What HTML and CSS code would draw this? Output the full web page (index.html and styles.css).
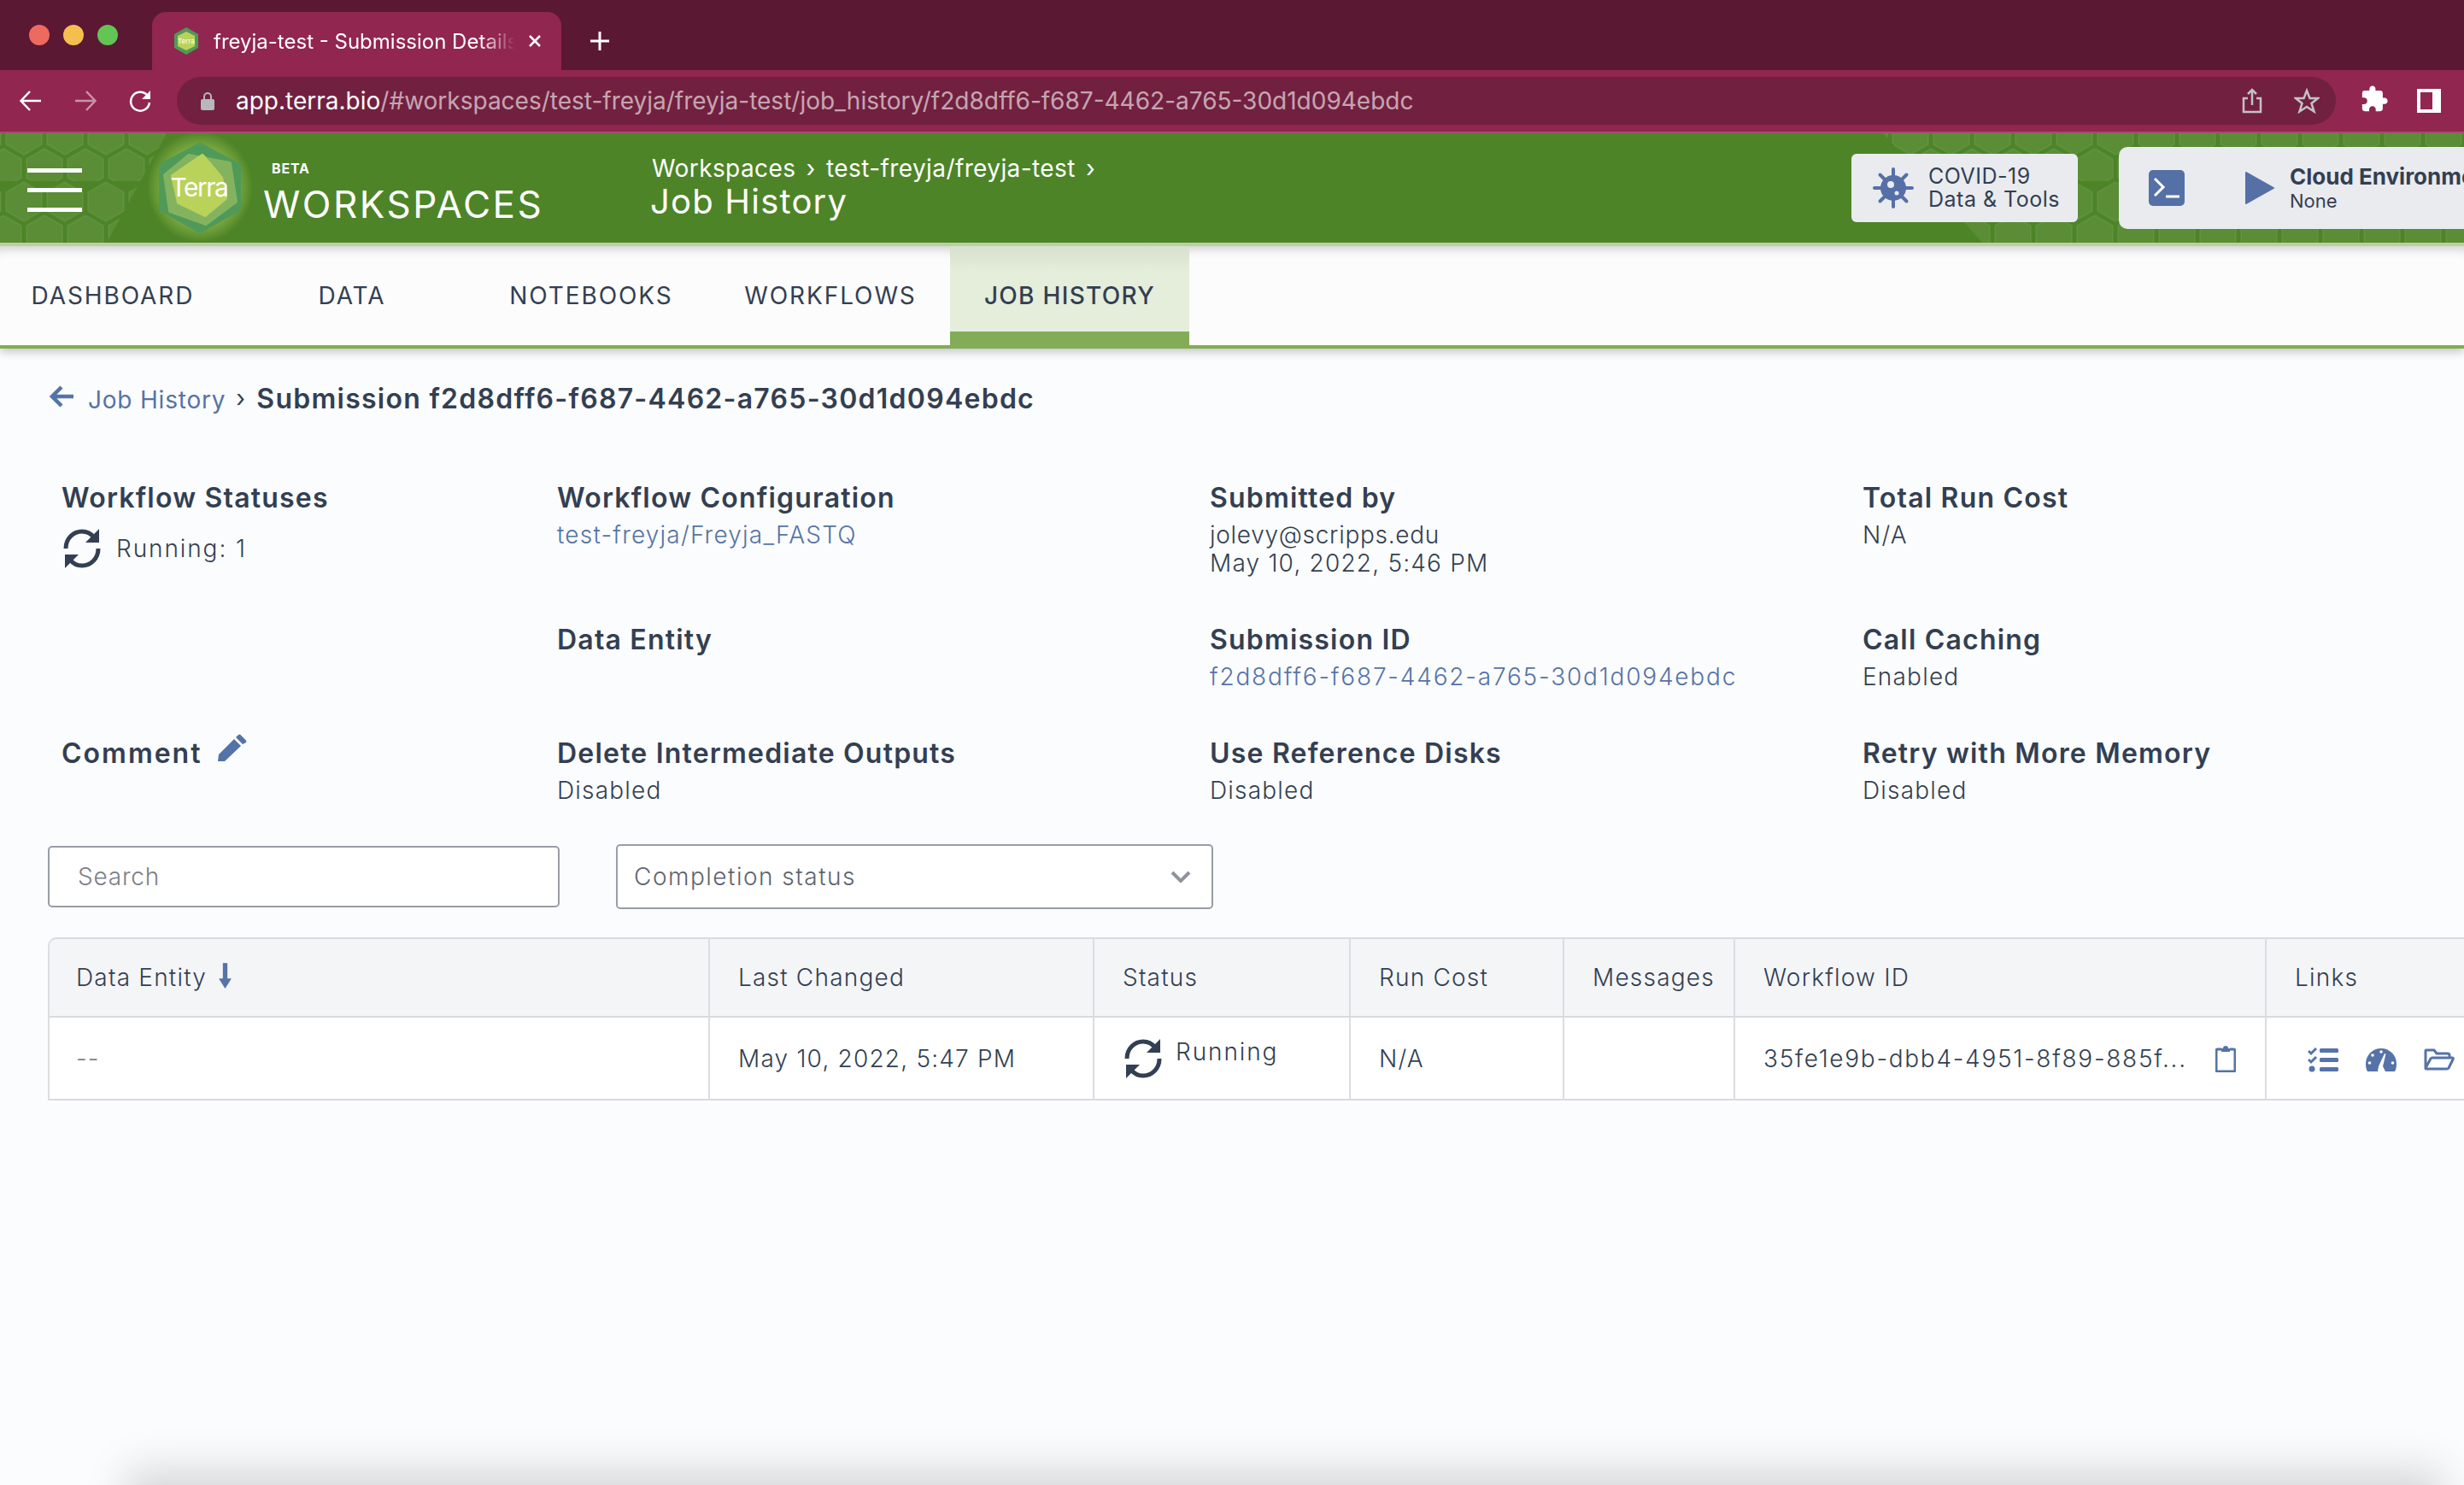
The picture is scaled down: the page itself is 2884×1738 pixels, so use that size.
FILE: index.html
```html
<!doctype html>
<html>
<head>
<meta charset="UTF-8">
<title>freyja-test - Submission Details</title>
<link rel="stylesheet" href="styles.css">
</head>
<body>
  <svg class="defs" width="0" height="0">
    <defs>
      <g id="sync">
        <path class="sync-arc" d="M5 25 C5 13 14 5 24 5 C30 5 35 8 38 12 M43 25 C43 37 34 45 24 45 C18 45 13 42 10 38"/>
        <path d="M44 2 V18 H28Z M4 48 V32 H20Z"/>
      </g>
      <pattern id="hexes" patternUnits="userSpaceOnUse" width="48" height="78" x="4" y="-22">
        <path d="M24 1 L45 13 V35 L24 47 L3 35 V13Z M0 40 L21 52 V74 L0 86 M48 40 L27 52 V74 L48 86" fill="#fff" fill-opacity=".07" stroke="#fff" stroke-opacity=".06" stroke-width="2"/>
      </pattern>
      <radialGradient id="glow">
        <stop offset="55%" stop-color="#c6e36a" stop-opacity=".6"/>
        <stop offset="100%" stop-color="#c6e36a" stop-opacity="0"/>
      </radialGradient>
    </defs>
  </svg>

  <!--browser chrome-->
  <div class="tabstrip">
    <div class="lights"><i class="light red"></i><i class="light yellow"></i><i class="light green"></i></div>
    <div class="tab">
      <svg class="favicon" viewBox="0 0 28 32">
        <path d="M14 0 L28 8 V24 L14 32 L0 24 V8Z" fill="#4f9a58"/>
        <path d="M14 5 L24 10 V22 L14 27 L4 22 V10Z" fill="#b9d25a"/>
        <text x="14" y="19" text-anchor="middle" class="favicon-text">Terra</text>
      </svg>
      <span class="tab-title">freyja-test - Submission Details</span>
      <svg class="tab-close" viewBox="0 0 16 16"><path d="M2 2 L14 14 M14 2 L2 14"/></svg>
    </div>
    <svg class="new-tab" viewBox="0 0 24 24"><path d="M12 1 V23 M1 12 H23"/></svg>
  </div>
  <div class="toolbar">
    <svg class="tool-icon" viewBox="0 0 28 28"><path d="M26 14 H3 M13 3 L2.500 14 L13 25"/></svg>
    <svg class="tool-icon dim" viewBox="0 0 28 28"><path d="M2 14 H25 M15 3 L25.500 14 L15 25"/></svg>
    <svg class="tool-icon" viewBox="0 0 28 28"><path d="M23.500 9 A11 11 0 1 0 25 16"/><path class="solid" d="M26 2 V12 H16Z"/></svg>
    <div class="omnibox">
      <svg class="lock" viewBox="0 0 16 22"><path d="M4 9 V6 a4 4 0 0 1 8 0 V9" fill="none" stroke="#b5b8bd" stroke-width="2"/><rect y="9" width="16" height="13" rx="2" fill="#b5b8bd"/></svg>
      <span class="url"><b>app.terra.bio</b>/#workspaces/test-freyja/freyja-test/job_history/f2d8dff6-f687-4462-a765-30d1d094ebdc</span>
      <svg class="omni-icon" viewBox="0 0 24 30"><path d="M12 20 V2 M7 7 L12 2 L17 7 M7 12 H2 V28 H22 V12 H17"/></svg>
      <svg class="omni-icon star" viewBox="0 0 30 30"><path d="M15 3 L18.500 12 H28 L20.500 18 L23.500 27.500 L15 22 L6.500 27.500 L9.500 18 L2 12 H11.500Z"/></svg>
    </div>
    <svg class="puzzle" viewBox="0 0 24 24"><path d="M20.500 11H19V7c0-1.100-.9-2-2-2h-4V3.500C13 2.120 11.880 1 10.500 1S8 2.120 8 3.500V5H4c-1.100 0-1.990.9-1.990 2v3.800H3.500c1.490 0 2.700 1.210 2.700 2.700s-1.210 2.700-2.700 2.700H2V20c0 1.100.9 2 2 2h3.800v-1.500c0-1.490 1.210-2.700 2.700-2.700 1.490 0 2.700 1.210 2.700 2.700V22H17c1.100 0 2-.9 2-2v-4h1.500c1.380 0 2.500-1.120 2.500-2.500S21.880 11 20.500 11z"/></svg>
    <i class="side-panel"></i>
  </div>

  <!--terra header-->
  <header class="app-header">
    <svg class="hex-bg" width="2884" height="128">
      <path d="M0 0 H195 L125 128 H0Z" fill="url(#hexes)"/>
      <path d="M2204 0 H2884 V128 H2320 L2260 60Z" fill="url(#hexes)"/>
    </svg>
    <div class="burger"><i></i><i></i><i></i></div>
    <svg class="logo" viewBox="0 0 130 128">
      <ellipse cx="65" cy="63" rx="62" ry="65" fill="url(#glow)"/>
      <path d="M65 14 L110 38 V88 L65 114 L20 88 V38Z" fill="#4f9a58" stroke="#4f9a58" stroke-width="6" stroke-linejoin="round"/>
      <path d="M52 26 L100 35 L107 80 L72 106 L30 91 L24 49Z" fill="#84b35f" stroke="#84b35f" stroke-width="4" stroke-linejoin="round"/>
      <path d="M68 26 L90 52 L95 76 L71 96 L40 81 L33 50Z" fill="#b9d25a" stroke="#b9d25a" stroke-width="4" stroke-linejoin="round"/>
      <text x="64" y="74" text-anchor="middle" class="logo-text">Terra</text>
    </svg>
    <div class="brand">
      <div class="beta">BETA</div>
      <div class="brand-name">WORKSPACES</div>
    </div>
    <div class="crumbs">
      <div class="crumb-path">Workspaces <span class="sep">›</span> test-freyja/freyja-test <span class="sep">›</span></div>
      <div class="crumb-page">Job History</div>
    </div>
    <div class="covid-btn">
      <svg class="virus" viewBox="0 0 48 48">
        <g class="virus-spikes"><path d="M24 2 V46 M2 24 H46 M8.500 8.500 L39.500 39.500 M39.500 8.500 L8.500 39.500"/></g>
        <circle cx="24" cy="24" r="15" fill="#5570a6"/>
        <circle cx="21" cy="20" r="4" fill="#e9ebef"/>
        <circle cx="28" cy="30" r="2.500" fill="#e9ebef"/>
      </svg>
      <div class="covid-text">COVID-19<br>Data &amp; Tools</div>
    </div>
    <div class="cloud-card">
      <svg class="terminal" viewBox="0 0 42 42">
        <rect width="42" height="42" rx="5" fill="#5570a6"/>
        <path d="M7 10 L17 20 L7 30 M20 31 H36" fill="none" stroke="#fff" stroke-width="3"/>
      </svg>
      <svg class="play" viewBox="0 0 36 40"><path d="M2 2 L34 20 L2 38Z"/></svg>
      <div class="cloud-text"><b>Cloud Environment</b><span>None</span></div>
    </div>
  </header>

  <nav class="tabs">
    <a class="nav-tab first">DASHBOARD</a>
    <a class="nav-tab">DATA</a>
    <a class="nav-tab">NOTEBOOKS</a>
    <a class="nav-tab">WORKFLOWS</a>
    <a class="nav-tab active">JOB HISTORY</a>
  </nav>

  <main class="content">
    <div class="back-row">
      <svg class="back-arrow" viewBox="0 0 28 28"><path d="M14 3 L3 14 L14 25 M3 14 H28"/></svg>
      <a class="link back-link">Job History</a>
      <span class="back-sep">›</span>
      <h1 class="sub-title">Submission f2d8dff6-f687-4462-a765-30d1d094ebdc</h1>
    </div>

    <section class="meta">
      <div>
        <div class="meta-title">Workflow Statuses</div>
        <div class="running"><svg class="sync" viewBox="0 0 48 50"><use href="#sync"/></svg><span>Running: 1</span></div>
      </div>
      <div>
        <div class="meta-title">Workflow Configuration</div>
        <div class="meta-value link">test-freyja/Freyja_FASTQ</div>
      </div>
      <div>
        <div class="meta-title">Submitted by</div>
        <div class="meta-value"><span class="email">jolevy@scripps.edu</span><br>May 10, 2022, 5:46 PM</div>
      </div>
      <div>
        <div class="meta-title">Total Run Cost</div>
        <div class="meta-value">N/A</div>
      </div>

      <div></div>
      <div><div class="meta-title">Data Entity</div></div>
      <div>
        <div class="meta-title">Submission ID</div>
        <div class="meta-value link sub-id">f2d8dff6-f687-4462-a765-30d1d094ebdc</div>
      </div>
      <div>
        <div class="meta-title">Call Caching</div>
        <div class="meta-value">Enabled</div>
      </div>

      <div>
        <div class="meta-title comment">Comment
          <svg class="pencil" viewBox="0 0 35 33"><path d="M1 32 L2 24 L20 6 L28 14 L9 32Z M22 4 L25 1 Q26 0 27.500 1 L33.500 7 Q35 8.500 34 10 L30 12Z"/></svg>
        </div>
      </div>
      <div>
        <div class="meta-title">Delete Intermediate Outputs</div>
        <div class="meta-value">Disabled</div>
      </div>
      <div>
        <div class="meta-title">Use Reference Disks</div>
        <div class="meta-value">Disabled</div>
      </div>
      <div>
        <div class="meta-title">Retry with More Memory</div>
        <div class="meta-value">Disabled</div>
      </div>
    </section>

    <div class="filters">
      <div class="search">Search</div>
      <div class="select">
        <span>Completion status</span>
        <svg class="chevron" viewBox="0 0 24 14"><path d="M2 2 L12 12 L22 2"/></svg>
      </div>
    </div>

    <table class="runs">
      <thead>
        <tr>
          <th class="c-entity">Data Entity <svg class="sort" viewBox="0 0 16 28"><path d="M8 0 V20"/><path class="solid" d="M1 17 H15 L8 28Z"/></svg></th>
          <th class="c-changed">Last Changed</th>
          <th class="c-status">Status</th>
          <th class="c-cost">Run Cost</th>
          <th class="c-msg">Messages</th>
          <th class="c-id">Workflow ID</th>
          <th class="c-links">Links</th>
        </tr>
      </thead>
      <tbody>
        <tr>
          <td class="muted">--</td>
          <td>May 10, 2022, 5:47 PM</td>
          <td><div class="status-cell"><svg class="sync" viewBox="0 0 48 50"><use href="#sync"/></svg><span>Running</span></div></td>
          <td>N/A</td>
          <td></td>
          <td>
            <div class="id-cell">
              <span class="wf-id">35fe1e9b-dbb4-4951-8f89-885f...</span>
              <svg class="clip" viewBox="0 0 24 32"><path class="line" d="M7 5 H3 Q1 5 1 7 V29 Q1 31 3 31 H21 Q23 31 23 29 V7 Q23 5 21 5 H17"/><path class="solid" d="M7 8 V4 H9 A3 3 0 0 1 15 4 H17 V8Z"/></svg>
            </div>
          </td>
          <td>
            <div class="link-icons">
              <svg class="row-icon" viewBox="0 0 36 30">
                <path class="check" d="M1 5 L4 8 L10 2 M1 15 L4 18 L10 12"/>
                <circle class="solid" cx="5" cy="26" r="3.500"/>
                <rect class="solid" x="14" y="2" width="22" height="5" rx="1.500"/>
                <rect class="solid" x="14" y="13" width="22" height="5" rx="1.500"/>
                <rect class="solid" x="14" y="24" width="22" height="5" rx="1.500"/>
              </svg>
              <svg class="row-icon" viewBox="0 0 36 30">
                <path class="solid" d="M0 20 A18 18 0 0 1 36 20 Q36 26 34 29 H2 Q0 26 0 20Z"/>
                <g fill="#fff"><circle cx="18" cy="6" r="1.800"/><circle cx="8" cy="10" r="1.800"/><circle cx="4.500" cy="19" r="1.800"/><circle cx="31.500" cy="19" r="1.800"/></g>
                <path d="M14 29 L15 23 L22 8 L23.500 8.500 L20 23 L23 29Z" fill="#fff"/>
              </svg>
              <svg class="row-icon" viewBox="0 0 36 26">
                <path class="line" d="M2 23 V3 Q2 2 3 2 H12 L15 6 H28 Q30 6 30 8 V11 M2 23 L8 12 Q9 11 10 11 H33 Q35 11 34 13 L29 23 Q28 24 27 24 H3 Q2 24 2 23Z"/>
              </svg>
            </div>
          </td>
        </tr>
      </tbody>
    </table>
  </main>
  <div class="edge-shade"></div>
</body>
</html>
```

FILE: styles.css
```css
* {
  box-sizing: border-box;
}
html, body {
  width: 100%;
  height: 100%;
  overflow: hidden;
}
body {
  margin: 0;
  display: flex;
  flex-direction: column;
  background: #fbfcfd;
  color: #333f52;
  font-family: Inter, "Liberation Sans", sans-serif;
  font-size: 28px;
}
.defs {
  position: absolute;
}
i {
  display: block;
}

/* browser chrome */
.tabstrip {
  height: 82px;
  flex: none;
  display: flex;
  align-items: flex-end;
  background: #5b1833;
}
.lights {
  display: flex;
  gap: 16px;
  width: 178px;
  padding: 0 0 29px 34px;
}
.light {
  width: 24px;
  height: 24px;
  border-radius: 50%;
}
.red { background: #ed6a5e; }
.yellow { background: #f5bf4f; }
.green { background: #62c554; }
.tab {
  width: 479px;
  height: 68px;
  display: flex;
  align-items: center;
  padding-left: 26px;
  background: #912650;
  border-radius: 16px 16px 0 0;
  color: #fff;
}
.favicon {
  width: 28px;
  height: 32px;
  flex: none;
}
.favicon-text {
  font-size: 8px;
  fill: #fff;
}
.tab-title {
  width: 353px;
  margin-left: 18px;
  font-size: 24px;
  white-space: nowrap;
  overflow: hidden;
  -webkit-mask-image: linear-gradient(to right, #000 88%, transparent 100%);
  mask-image: linear-gradient(to right, #000 88%, transparent 100%);
}
.tab-close {
  width: 16px;
  height: 16px;
  margin-left: 15px;
  fill: none;
  stroke: #fff;
  stroke-width: 2.500;
}
.new-tab {
  width: 24px;
  height: 24px;
  margin: 0 0 22px 33px;
  fill: none;
  stroke: #fff;
  stroke-width: 3;
}
.toolbar {
  height: 74px;
  flex: none;
  display: flex;
  align-items: flex-start;
  padding: 8px 26px 0 22px;
  background: #912650;
  border-bottom: 2px solid #a0506c;
}
.tool-icon {
  width: 28px;
  height: 28px;
  margin: 14px 36px 0 0;
  flex: none;
  fill: none;
  stroke: #fff;
  stroke-width: 2.500;
}
.tool-icon.dim {
  opacity: .5;
}
.tool-icon .solid {
  fill: #fff;
  stroke: none;
}
.omnibox {
  width: 2527px;
  height: 56px;
  margin-left: -7px;
  flex: none;
  display: flex;
  align-items: center;
  padding-left: 28px;
  background: #72203f;
  border-radius: 28px;
}
.lock {
  width: 16px;
  height: 22px;
  flex: none;
}
.url {
  flex: 1;
  margin-left: 25px;
  color: rgba(255, 255, 255, .62);
  font-size: 28px;
  white-space: nowrap;
}
.url b {
  color: #fff;
  font-weight: 400;
}
.omni-icon {
  width: 24px;
  height: 30px;
  margin-right: 37px;
  flex: none;
  fill: none;
  stroke: #c4c1c4;
  stroke-width: 2.500;
}
.omni-icon.star {
  width: 30px;
  margin-right: 19px;
}
.puzzle {
  width: 34px;
  height: 34px;
  margin: 9px 0 0 28px;
  flex: none;
  fill: #fff;
}
.side-panel {
  width: 28px;
  height: 28px;
  margin: 14px 0 0 33px;
  flex: none;
  border: solid #fff;
  border-width: 4px 10px 4px 4px;
}

/* terra header */
.app-header {
  position: relative;
  height: 132px;
  flex: none;
  display: flex;
  align-items: flex-start;
  background: #4d8427;
  border-bottom: 4px solid #b9d19d;
}
.hex-bg {
  position: absolute;
  left: 0;
  top: 0;
}
.burger, .logo, .brand, .crumbs, .covid-btn, .cloud-card {
  position: relative;
}
.burger {
  width: 64px;
  margin: 41px 0 0 32px;
}
.burger i {
  height: 5px;
  margin-bottom: 18px;
  background: #fff;
}
.logo {
  width: 130px;
  height: 128px;
  margin-left: 73px;
  flex: none;
}
.logo-text {
  font-size: 30px;
  letter-spacing: -1.500px;
  fill: #fff;
}
.brand {
  width: 453px;
  margin-left: 11px;
  color: #fff;
}
.beta {
  margin: 31px 0 0 8px;
  font-size: 16px;
  line-height: 20px;
  font-weight: 700;
  letter-spacing: .8px;
}
.brand-name {
  margin-top: 8px;
  margin-left: -2px;
  font-size: 44px;
  line-height: 48px;
  letter-spacing: 2.500px;
}
.crumbs {
  width: 1404px;
  color: #fff;
}
.crumb-path {
  margin-top: 25px;
  font-size: 28px;
  line-height: 32px;
  letter-spacing: .4px;
}
.sep {
  margin: 0 4px;
}
.crumb-page {
  margin-top: 1px;
  margin-left: -2px;
  font-size: 40px;
  line-height: 44px;
  letter-spacing: 1.200px;
}
.covid-btn {
  width: 265px;
  height: 80px;
  margin-top: 24px;
  display: flex;
  align-items: center;
  padding-left: 25px;
  background: #e9ebef;
  border-radius: 6px;
}
.virus {
  width: 48px;
  height: 48px;
  flex: none;
}
.virus-spikes path {
  fill: none;
  stroke: #5570a6;
  stroke-width: 4;
  stroke-linecap: round;
}
.covid-text {
  margin-left: 17px;
  font-size: 25px;
  line-height: 27px;
  letter-spacing: .5px;
}
.cloud-card {
  flex: 1;
  height: 96px;
  margin: 16px 0 0 48px;
  display: flex;
  align-items: center;
  padding-left: 35px;
  overflow: hidden;
  background: #e9ebef;
  border-radius: 10px 0 0 10px;
}
.terminal {
  width: 42px;
  height: 42px;
  flex: none;
}
.play {
  width: 36px;
  height: 40px;
  margin-left: 70px;
  flex: none;
  fill: #5570a6;
  stroke: #5570a6;
  stroke-width: 2;
  stroke-linejoin: round;
}
.cloud-text {
  margin-left: 17px;
  display: flex;
  flex-direction: column;
  white-space: nowrap;
}
.cloud-text b {
  font-size: 26px;
  line-height: 30px;
}
.cloud-text span {
  font-size: 22px;
  line-height: 26px;
}

/* tabs */
.tabs {
  height: 120px;
  flex: none;
  display: flex;
  background: #fcfcfc;
  border-bottom: 4px solid #82ac56;
  box-shadow: inset 0 14px 12px -10px rgba(0, 0, 0, .18), 0 4px 10px rgba(0, 0, 0, .22);
}
.nav-tab {
  width: 280px;
  height: 120px;
  display: flex;
  align-items: center;
  justify-content: center;
  padding-bottom: 4px;
  font-size: 28px;
  letter-spacing: 1.900px;
}
.nav-tab.first {
  width: 272px;
  padding-right: 8px;
}
.nav-tab.active {
  align-items: flex-start;
  padding: 41px 0 0;
  font-weight: 500;
  letter-spacing: 1.300px;
  background: linear-gradient(#d7e0cc, #e5eedb 30%);
  border-bottom: 20px solid #82ac56;
}

/* submission details */
.content {
  padding: 40px 0 0 56px;
  letter-spacing: 1.200px;
}
.link {
  color: #5573a8;
}
.back-row {
  height: 36px;
  display: flex;
  align-items: center;
}
.back-arrow {
  width: 28px;
  height: 28px;
  margin: -4px 0 0 2px;
  fill: none;
  stroke: #5573a8;
  stroke-width: 4.500;
}
.back-link {
  margin: 4px 0 0 17px;
  letter-spacing: .8px;
}
.back-sep {
  margin: 0 12px 0 12px;
}
.sub-title {
  margin: 0;
  font-size: 32px;
  font-weight: 600;
  letter-spacing: 1.260px;
}
.meta {
  margin-top: 82px;
  padding-left: 16px;
  display: grid;
  grid-template-columns: 580px 764px 764px 1fr;
  grid-template-rows: 166px 133px 123px;
}
.meta-title {
  padding-top: 1px;
  font-size: 32px;
  line-height: 32px;
  font-weight: 600;
}
.meta-value {
  margin-top: 11px;
  line-height: 33px;
  font-weight: 300;
}
.email {
  letter-spacing: .7px;
}
.sub-id {
  letter-spacing: 1.800px;
}
.comment {
  display: flex;
  gap: 18px;
  letter-spacing: 2px;
}
.pencil {
  width: 35px;
  height: 33px;
  margin-top: -7px;
  fill: #5573a8;
}
.running {
  margin-top: 18px;
  display: flex;
  align-items: center;
  gap: 16px;
  font-weight: 300;
  letter-spacing: 1.900px;
}
.sync {
  width: 48px;
  height: 50px;
  flex: none;
  fill: #333f52;
}
.sync-arc {
  fill: none;
  stroke: #333f52;
  stroke-width: 5;
}

/* filters and table */
.filters {
  height: 76px;
  display: flex;
  align-items: center;
  gap: 66px;
}
.search {
  width: 599px;
  height: 72px;
  display: flex;
  align-items: center;
  padding-left: 33px;
  background: #fff;
  border: 2px solid #9a9da6;
  border-radius: 5px;
  color: #7c7f86;
  font-weight: 300;
  letter-spacing: .8px;
}
.select {
  width: 699px;
  height: 76px;
  display: flex;
  align-items: center;
  justify-content: space-between;
  padding: 0 24px 0 19px;
  background: #fff;
  border: 2px solid #9a9da6;
  border-radius: 5px;
  color: #5d6470;
  font-weight: 300;
  letter-spacing: 1.500px;
}
.chevron {
  width: 24px;
  height: 14px;
  fill: none;
  stroke: #8f939b;
  stroke-width: 4;
}
.runs {
  margin-top: 33px;
  width: 2884px;
  table-layout: fixed;
  border-collapse: separate;
  border-spacing: 0;
  font-weight: 300;
}
.runs th, .runs td {
  padding: 0 0 0 33px;
  text-align: left;
  font-weight: 300;
  white-space: nowrap;
  border-right: 2px solid #dcdde1;
  border-bottom: 2px solid #d8dadf;
}
.runs th {
  height: 94px;
  background: #f4f5f7;
  border-top: 2px solid #d8dadf;
}
.runs th:first-child {
  border-top-left-radius: 10px;
}
.runs td {
  height: 97px;
  background: #fff;
}
.runs th:first-child, .runs td:first-child {
  padding-left: 31px;
  border-left: 2px solid #dcdde1;
}
.c-entity { width: 775px; }
.c-changed { width: 450px; }
.c-status { width: 300px; }
.c-cost { width: 250px; }
.c-msg { width: 200px; }
.c-id { width: 622px; }
.c-links { width: 287px; }
.sort {
  width: 17px;
  height: 30px;
  vertical-align: -3px;
  margin-left: 4px;
}
.sort path {
  fill: none;
  stroke: #5573a8;
  stroke-width: 5;
}
.sort .solid {
  fill: #5573a8;
  stroke: none;
}
.muted {
  color: #7c7f86;
}
.status-cell {
  display: flex;
  align-items: flex-start;
  gap: 14px;
  letter-spacing: 1.900px;
}
.id-cell {
  display: flex;
  align-items: center;
}
.wf-id {
  width: 529px;
  letter-spacing: 1.700px;
}
.clip {
  width: 24px;
  height: 32px;
}
.clip .line, .row-icon .line {
  fill: none;
  stroke: #5573a8;
  stroke-width: 3;
}
.clip .solid, .row-icon .solid {
  fill: #5573a8;
}
.row-icon .check {
  fill: none;
  stroke: #5573a8;
  stroke-width: 3;
}
.link-icons {
  display: flex;
  gap: 32px;
  align-items: center;
  padding: 2px 0 0 15px;
}
.row-icon {
  width: 36px;
  height: 30px;
}
.edge-shade {
  height: 0;
  margin: auto 74px 0 197px;
  box-shadow: 0 32px 50px 50px rgba(0, 0, 0, .15);
}
```
